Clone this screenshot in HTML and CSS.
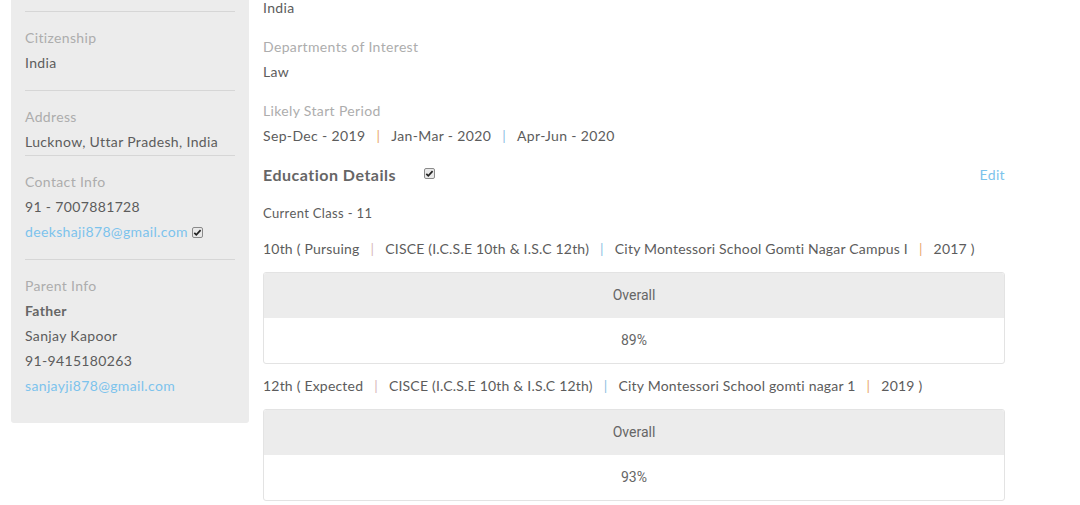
FILE: index.html
```html
<!DOCTYPE html>
<html>
<head>
<meta charset="utf-8">
<link rel="stylesheet" href="styles.css">
</head>
<body>
<div class="page">
  <aside class="sidebar">
    <div class="sec sec-top"></div>
    <div class="sec">
      <div class="label">Citizenship</div>
      <div class="val">India</div>
    </div>
    <div class="sec sec-tight">
      <div class="label">Address</div>
      <div class="val">Lucknow, Uttar Pradesh, India</div>
    </div>
    <div class="sec">
      <div class="label">Contact Info</div>
      <div class="val">91 - 7007881728</div>
      <div class="val"><span class="link">deekshaji878@gmail.com</span> <svg class="chk" width="11" height="11" viewBox="0 0 11 11"><rect x="0.5" y="0.5" width="10" height="10" rx="1.5" fill="#e9e9e9" stroke="#8a8a8a"/><path d="M2.3 5.8 L4.3 7.8 L8.6 3.2" fill="none" stroke="#222" stroke-width="1.7"/></svg></div>
    </div>
    <div class="sec sec-last">
      <div class="label">Parent Info</div>
      <div class="val bold">Father</div>
      <div class="val">Sanjay Kapoor</div>
      <div class="val">91-9415180263</div>
      <div class="val"><span class="link">sanjayji878@gmail.com</span></div>
    </div>
  </aside>
  <main class="main">
    <div class="group first">
      <div class="val">India</div>
    </div>
    <div class="group">
      <div class="label">Departments of Interest</div>
      <div class="val">Law</div>
    </div>
    <div class="group">
      <div class="label">Likely Start Period</div>
      <div class="val">Sep-Dec - 2019<span class="sep s-orange">|</span>Jan-Mar - 2020<span class="sep s-blue">|</span>Apr-Jun - 2020</div>
    </div>
    <div class="edu-head">
      <div class="edu-title">Education Details <svg class="chk chk-h" width="11" height="11" viewBox="0 0 11 11"><rect x="0.5" y="0.5" width="10" height="10" rx="1.5" fill="#e9e9e9" stroke="#8a8a8a"/><path d="M2.3 5.8 L4.3 7.8 L8.6 3.2" fill="none" stroke="#222" stroke-width="1.7"/></svg></div>
      <span class="link edit">Edit</span>
    </div>
    <div class="cur">Current Class - 11</div>
    <div class="eduline">10th ( Pursuing<span class="sep s-pink">|</span>CISCE (I.C.S.E 10th &amp; I.S.C 12th)<span class="sep s-blue">|</span>City Montessori School Gomti Nagar Campus I<span class="sep s-orange">|</span>2017 )</div>
    <div class="score score-first">
      <div class="score-h">Overall</div>
      <div class="score-b">89%</div>
    </div>
    <div class="eduline">12th ( Expected<span class="sep s-pink">|</span>CISCE (I.C.S.E 10th &amp; I.S.C 12th)<span class="sep s-blue">|</span>City Montessori School gomti nagar 1<span class="sep s-orange">|</span>2019 )</div>
    <div class="score">
      <div class="score-h">Overall</div>
      <div class="score-b">93%</div>
    </div>
  </main>
</div>
</body>
</html>
```
FILE: styles.css
```css
html, body {
  margin: 0;
  padding: 0;
  background: #fff;
}
body {
  font-family: Lato, "Open Sans", sans-serif;
  font-size: 14px;
  letter-spacing: 0.35px;
  color: #5c5c5c;
  overflow: hidden;
}
.page {
  display: flex;
  align-items: flex-start;
  gap: 14px;
  padding-left: 11px;
}
.sidebar {
  width: 238px;
  box-sizing: border-box;
  background: #ececec;
  padding: 0 14px 25px;
  border-radius: 0 0 3px 3px;
}
.sec {
  padding: 13px 0 15px;
  border-bottom: 1px solid #d6d6d6;
}
.sec-top {
  padding: 0;
  height: 11px;
}
.sec-tight {
  padding-bottom: 1px;
}
.sec-last {
  border-bottom: none;
  padding-bottom: 0;
}
.label {
  color: #adadad;
  line-height: 25px;
}
.val {
  line-height: 25px;
  color: #5c5c5c;
}
.bold {
  font-weight: bold;
  color: #666;
}
.link {
  color: #7cc3ec;
}
.chk {
  vertical-align: -1px;
}
.main {
  width: 742px;
  margin-top: -5px;
}
.group {
  margin-bottom: 14px;
}
.edu-head {
  display: flex;
  justify-content: space-between;
  align-items: center;
  height: 25px;
  margin-bottom: 14px;
}
.edu-title {
  font-size: 16px;
  font-weight: bold;
  letter-spacing: 0.5px;
  color: #666;
}
.chk-h {
  margin-left: 24px;
  vertical-align: 2px;
}
.edit {
  font-size: 14px;
}
.cur {
  font-size: 13px;
  line-height: 25px;
  margin-bottom: 10px;
}
.eduline {
  font-size: 14px;
  letter-spacing: 0.2px;
  line-height: 25px;
  margin-bottom: 11px;
}
.sep {
  display: inline-block;
  margin: 0 11px;
}
.s-orange { color: #e9a86e; }
.s-blue { color: #8dbfe3; }
.s-pink { color: #d8b9b9; }
.score {
  border: 1px solid #e3e3e3;
  border-radius: 3px;
  overflow: hidden;
  margin-bottom: 10px;
  font-family: Roboto, sans-serif;
  letter-spacing: 0;
  font-size: 14px;
  color: #666;
  text-align: center;
}
.score-first {
  margin-bottom: 9px;
}
.score-h {
  background: #ececec;
  height: 45px;
  line-height: 45px;
}
.score-b {
  height: 45px;
  line-height: 45px;
}
```
